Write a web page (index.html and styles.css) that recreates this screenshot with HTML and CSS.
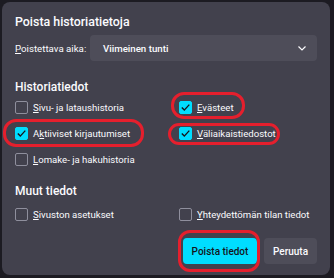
FILE: index.html
```html
<!DOCTYPE html>
<html lang="fi">
<head>
<meta charset="UTF-8">
<title>Poista historiatietoja</title>
<link rel="stylesheet" href="styles.css">
</head>
<body>

<div class="dialog">
  <h1 class="title">Poista historiatietoja</h1>

  <div class="range">
    <label class="range-label"><u>P</u>oistettava aika:</label>
    <div class="select">
      <span>Viimeinen tunti</span>
      <svg class="chevron" width="8" height="5" viewBox="0 0 8 5"><polyline points="0.5,0.5 4,4 7.5,0.5" fill="none" stroke="#fbfbfe" stroke-width="1.2"/></svg>
    </div>
  </div>

  <h2 class="section">Historiatiedot</h2>
  <div class="options">
    <label class="check"><span class="box"></span><span><u>S</u>ivu- ja lataushistoria</span></label>
    <label class="check ring ring-cookies"><span class="box on"><svg width="11" height="11" viewBox="0 0 11 11"><polyline points="1.8,5.6 4.3,8.1 9.3,2.6" fill="none" stroke="#15141a" stroke-width="1.4"/></svg></span><span><u>E</u>västeet</span></label>
    <label class="check ring ring-logins"><span class="box on"><svg width="11" height="11" viewBox="0 0 11 11"><polyline points="1.8,5.6 4.3,8.1 9.3,2.6" fill="none" stroke="#15141a" stroke-width="1.4"/></svg></span><span>A<u>k</u>tiiviset kirjautumiset</span></label>
    <label class="check ring ring-cache"><span class="box on"><svg width="11" height="11" viewBox="0 0 11 11"><polyline points="1.8,5.6 4.3,8.1 9.3,2.6" fill="none" stroke="#15141a" stroke-width="1.4"/></svg></span><span><u>V</u>äliaikaistiedostot</span></label>
    <label class="check"><span class="box"></span><span><u>L</u>omake- ja hakuhistoria</span></label>
  </div>

  <h2 class="section section-other">Muut tiedot</h2>
  <div class="options options-other">
    <label class="check"><span class="box"></span><span><u>S</u>ivuston asetukset</span></label>
    <label class="check"><span class="box"></span><span><u>Y</u>hteydettömän tilan tiedot</span></label>
  </div>

  <div class="buttons">
    <button class="btn primary ring ring-button">Poista tiedot</button>
    <button class="btn">Peruuta</button>
  </div>
</div>

</body>
</html>
```

FILE: styles.css
```css
body { margin: 0; background: #1c1b22; font-family: Roboto, "Noto Sans", sans-serif; color: #fbfbfe; }
.dialog { margin: 2px; width: 328px; height: 273px; box-sizing: border-box; padding: 12px 13px 0 13px; background: #42414d; border-radius: 8px; }

.title { margin: 0; font-size: 12.4px; line-height: 16px; font-weight: 500; white-space: nowrap; }

.range { display: flex; align-items: center; margin-top: 5px; height: 26px; font-size: 9.7px; }
.range-label { width: 75px; white-space: nowrap; }
.select { flex: 1; height: 26px; box-sizing: border-box; display: flex; align-items: center; justify-content: space-between; padding: 0 11px 0 13px; background: #4e4d59; border-radius: 4px; font-weight: 500; }

.section { margin: 19px 0 0; font-size: 12px; line-height: 14px; font-weight: 500; }
.section-other { margin-top: 12px; }

.options { display: grid; grid-template-columns: 164px 1fr; grid-auto-rows: 26px; font-size: 9.6px; }
.options-other { margin-top: 3px; }
.check { display: flex; align-items: center; gap: 5px; position: relative; justify-self: start; height: 26px; white-space: nowrap; }
.box { width: 13px; height: 13px; box-sizing: border-box; border: 1px solid #8f8f9d; border-radius: 2px; display: flex; align-items: center; justify-content: center; }
.box.on { background: #00ddff; border-color: #00ddff; }

u { text-decoration-thickness: 1px; text-underline-offset: 1px; }

.buttons { display: flex; justify-content: flex-end; gap: 7px; margin-top: 11px; }
.btn { height: 26px; border: 0; border-radius: 4px; padding: 0; font-family: inherit; font-size: 10px; font-weight: 500; color: #fbfbfe; background: #4e4d59; width: 53px; }
.btn.primary { width: 74px; background: #00ddff; color: #15141a; position: relative; }

/* red annotation rings */
.ring::after { content: ""; position: absolute; box-sizing: border-box; border: 3px solid #e51f2d; border-radius: 13px; pointer-events: none; }
.ring-cookies::after { left: -8px; top: -2px; width: 74px; height: 27px; }
.ring-logins::after { left: -12px; top: -1px; width: 141px; height: 28px; }
.ring-cache::after { left: -11px; top: 3px; width: 112px; height: 22px; border-radius: 11px; }
.ring-button::after { left: -5px; top: -8px; width: 82px; height: 42px; border-radius: 12px; }
```
